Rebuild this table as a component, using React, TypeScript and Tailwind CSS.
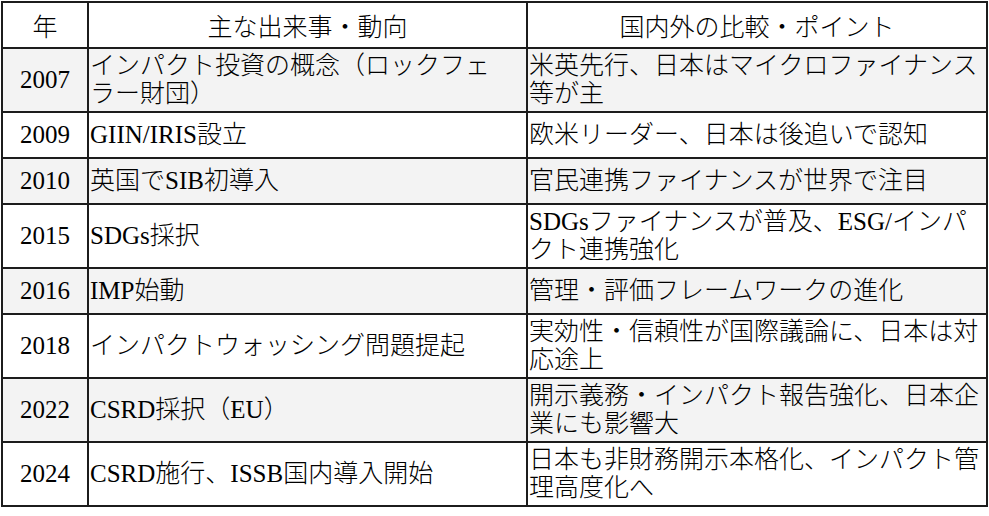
import React from "react";

type Row = { year: string; event: string[]; point: string[]; shaded: boolean };

const rows: Row[] = [
  {
    year: "2007",
    event: ["インパクト投資の概念（ロックフェ", "ラー財団）"],
    point: ["米英先行、日本はマイクロファイナンス", "等が主"],
    shaded: true,
  },
  { year: "2009", event: ["GIIN/IRIS設立"], point: ["欧米リーダー、日本は後追いで認知"], shaded: false },
  { year: "2010", event: ["英国でSIB初導入"], point: ["官民連携ファイナンスが世界で注目"], shaded: true },
  {
    year: "2015",
    event: ["SDGs採択"],
    point: ["SDGsファイナンスが普及、ESG/インパ", "クト連携強化"],
    shaded: false,
  },
  { year: "2016", event: ["IMP始動"], point: ["管理・評価フレームワークの進化"], shaded: true },
  {
    year: "2018",
    event: ["インパクトウォッシング問題提起"],
    point: ["実効性・信頼性が国際議論に、日本は対", "応途上"],
    shaded: false,
  },
  {
    year: "2022",
    event: ["CSRD採択（EU）"],
    point: ["開示義務・インパクト報告強化、日本企", "業にも影響大"],
    shaded: true,
  },
  {
    year: "2024",
    event: ["CSRD施行、ISSB国内導入開始"],
    point: ["日本も非財務開示本格化、インパクト管", "理高度化へ"],
    shaded: false,
  },
];

const jp = "font-['Noto_Sans_CJK_JP',sans-serif] font-light";

// latin runs in the serif, kana/kanji in a light gothic (tight leading so the tall CJK metrics don't grow the line)
function Mixed({ text }: { text: string }) {
  const parts = text.split(/([A-Za-z0-9/]+)/).filter(Boolean);
  return (
    <>
      {parts.map((p, i) =>
        /^[A-Za-z0-9/]+$/.test(p) ? (
          <span key={i}>{p}</span>
        ) : (
          <span key={i} className={`${jp} leading-[20px]`}>{p}</span>
        )
      )}
    </>
  );
}

function Lines({ lines }: { lines: string[] }) {
  return (
    <>
      {lines.map((l, i) => (
        <React.Fragment key={i}>
          {i > 0 && <br />}
          <Mixed text={l} />
        </React.Fragment>
      ))}
    </>
  );
}

const cell = "border-2 border-[#1c1c1c] align-middle py-[3px]";

export default function App() {
  return (
    <div className="w-[989px] h-[516px] bg-white pt-px pl-px font-['Liberation_Serif',serif] text-[25px] leading-[28px] text-black">
      <table className="table-fixed border-collapse w-[985px]">
        <colgroup>
          <col className="w-[86px]" />
          <col className="w-[439px]" />
          <col className="w-[460px]" />
        </colgroup>
        <thead>
          <tr className="h-[46px]">
            <th className={`${cell} ${jp} text-center`}>年</th>
            <th className={`${cell} ${jp} text-center`}>主な出来事・動向</th>
            <th className={`${cell} ${jp} text-center`}>国内外の比較・ポイント</th>
          </tr>
        </thead>
        <tbody>
          {rows.map((r) => (
            <tr key={r.year} className={`h-[46px] ${r.shaded ? "bg-[#f3f3f3]" : "bg-white"}`}>
              <td className={`${cell} font-normal text-center`}>{r.year}</td>
              <td className={`${cell} font-normal pl-px`}>
                <Lines lines={r.event} />
              </td>
              <td className={`${cell} font-normal pl-px whitespace-nowrap`}>
                <Lines lines={r.point} />
              </td>
            </tr>
          ))}
        </tbody>
      </table>
    </div>
  );
}
